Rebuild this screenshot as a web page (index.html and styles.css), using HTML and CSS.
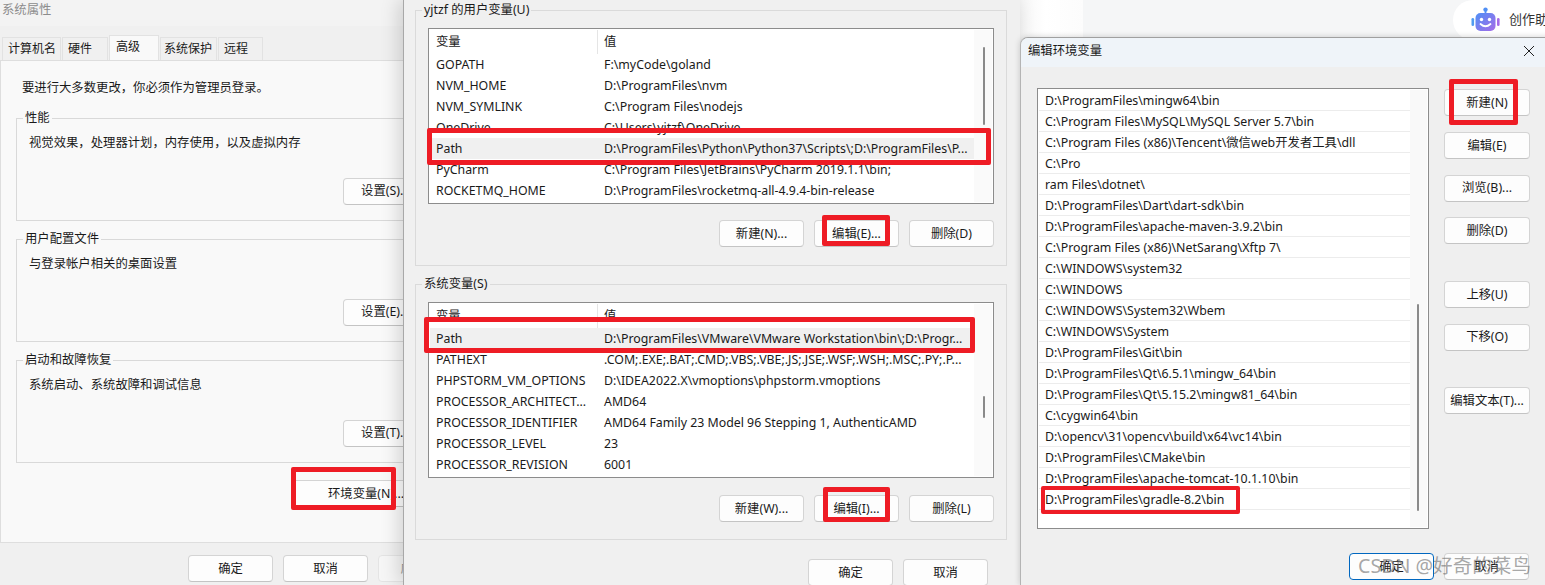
FILE: index.html
```html
<!DOCTYPE html>
<html lang="zh-CN">
<head>
<meta charset="utf-8">
<title>环境变量</title>
<link rel="stylesheet" href="styles.css">
</head>
<body>
<div class="backdrop">
  <div class="fade"></div>
  <div class="helper">
    <svg class="robot" width="30" height="25" viewBox="0 0 30 25">
      <defs><linearGradient id="rg" x1="0" y1="0" x2="1" y2="1"><stop offset="0" stop-color="#4f8ff5"/><stop offset="1" stop-color="#a66be8"/></linearGradient></defs>
      <circle cx="14.5" cy="2.6" r="2.2" fill="#4f8ff5"/>
      <rect x="13.6" y="3" width="1.8" height="4" fill="#4f8ff5"/>
      <rect x="0.5" y="11" width="2.6" height="8" rx="1.3" fill="#4f9bf0"/>
      <rect x="26" y="11" width="2.6" height="8" rx="1.3" fill="#a66be8"/>
      <rect x="4.5" y="6" width="20" height="18" rx="5" fill="url(#rg)"/>
      <circle cx="10.5" cy="12.5" r="1.7" fill="#fff"/>
      <circle cx="18.5" cy="12.5" r="1.7" fill="#fff"/>
      <path d="M9.5 17 Q14.5 21.5 19.5 17" fill="none" stroke="#fff" stroke-width="1.8" stroke-linecap="round"/>
    </svg>
    <span class="helper-text">创作助手</span>
  </div>
</div>

<section class="win win-system">
  <div class="sys-inner">
    <div class="sys-title">系统属性</div>
    <div class="tabs">
      <span class="tab tab-a">计算机名</span><span class="tab tab-b">硬件</span><span class="tab tab-on">高级</span><span class="tab tab-d">系统保护</span><span class="tab tab-e">远程</span>
    </div>
    <div class="panel">
      <p class="notice">要进行大多数更改，你必须作为管理员登录。</p>
      <fieldset class="sys-group">
        <legend>性能</legend>
        <p class="desc">视觉效果，处理器计划，内存使用，以及虚拟内存</p>
        <div class="right"><button class="btn">设置(S)...</button></div>
      </fieldset>
      <fieldset class="sys-group">
        <legend>用户配置文件</legend>
        <p class="desc">与登录帐户相关的桌面设置</p>
        <div class="right"><button class="btn">设置(E)...</button></div>
      </fieldset>
      <fieldset class="sys-group">
        <legend>启动和故障恢复</legend>
        <p class="desc">系统启动、系统故障和调试信息</p>
        <div class="right"><button class="btn">设置(T)...</button></div>
      </fieldset>
      <div class="env-row"><button class="btn btn-env">环境变量(N)...</button></div>
    </div>
    <div class="sys-actions">
      <button class="btn">确定</button><button class="btn">取消</button><button class="btn btn-off">应用(A)</button>
    </div>
  </div>
</section>

<section class="win win-env">
  <fieldset class="env-group">
    <legend>yjtzf 的用户变量(U)</legend>
    <div class="vlist">
      <div class="vbar"><div class="thumb thumb-user"></div></div>
      <div class="vrow vhead"><span>变量</span><span>值</span></div>
      <div class="vrow"><span>GOPATH</span><span>F:\myCode\goland</span></div>
      <div class="vrow"><span>NVM_HOME</span><span>D:\ProgramFiles\nvm</span></div>
      <div class="vrow"><span>NVM_SYMLINK</span><span>C:\Program Files\nodejs</span></div>
      <div class="vrow"><span>OneDrive</span><span>C:\Users\yjtzf\OneDrive</span></div>
      <div class="vrow vsel"><span>Path</span><span>D:\ProgramFiles\Python\Python37\Scripts\;D:\ProgramFiles\P...</span></div>
      <div class="vrow"><span>PyCharm</span><span>C:\Program Files\JetBrains\PyCharm 2019.1.1\bin;</span></div>
      <div class="vrow"><span>ROCKETMQ_HOME</span><span>D:\ProgramFiles\rocketmq-all-4.9.4-bin-release</span></div>
    </div>
    <div class="env-btns"><button class="btn">新建(N)...</button><button class="btn">编辑(E)...</button><button class="btn">删除(D)</button></div>
  </fieldset>
  <fieldset class="env-group env-group-sys">
    <legend>系统变量(S)</legend>
    <div class="vlist">
      <div class="vbar"><div class="thumb thumb-sys"></div></div>
      <div class="vrow vhead"><span>变量</span><span>值</span></div>
      <div class="vrow vsel"><span>Path</span><span>D:\ProgramFiles\VMware\VMware Workstation\bin\;D:\Progr...</span></div>
      <div class="vrow"><span>PATHEXT</span><span>.COM;.EXE;.BAT;.CMD;.VBS;.VBE;.JS;.JSE;.WSF;.WSH;.MSC;.PY;.P...</span></div>
      <div class="vrow"><span>PHPSTORM_VM_OPTIONS</span><span>D:\IDEA2022.X\vmoptions\phpstorm.vmoptions</span></div>
      <div class="vrow"><span>PROCESSOR_ARCHITECT...</span><span>AMD64</span></div>
      <div class="vrow"><span>PROCESSOR_IDENTIFIER</span><span>AMD64 Family 23 Model 96 Stepping 1, AuthenticAMD</span></div>
      <div class="vrow"><span>PROCESSOR_LEVEL</span><span>23</span></div>
      <div class="vrow"><span>PROCESSOR_REVISION</span><span>6001</span></div>
    </div>
    <div class="env-btns"><button class="btn">新建(W)...</button><button class="btn">编辑(I)...</button><button class="btn">删除(L)</button></div>
  </fieldset>
  <div class="env-actions"><button class="btn">确定</button><button class="btn">取消</button></div>
</section>

<section class="win win-edit">
  <header class="edit-title">
    <span>编辑环境变量</span>
    <svg class="close" width="12" height="12" viewBox="0 0 12 12"><path d="M1 1 L11 11 M11 1 L1 11" stroke="#222" stroke-width="1" fill="none"/></svg>
  </header>
  <div class="edit-body">
    <div class="plist">
      <div class="pbar"><div class="thumb thumb-path"></div></div>
      <div class="prow">D:\ProgramFiles\mingw64\bin</div>
      <div class="prow">C:\Program Files\MySQL\MySQL Server 5.7\bin</div>
      <div class="prow">C:\Program Files (x86)\Tencent\微信web开发者工具\dll</div>
      <div class="prow">C:\Pro</div>
      <div class="prow">ram Files\dotnet\</div>
      <div class="prow">D:\ProgramFiles\Dart\dart-sdk\bin</div>
      <div class="prow">D:\ProgramFiles\apache-maven-3.9.2\bin</div>
      <div class="prow">C:\Program Files (x86)\NetSarang\Xftp 7\</div>
      <div class="prow">C:\WINDOWS\system32</div>
      <div class="prow">C:\WINDOWS</div>
      <div class="prow">C:\WINDOWS\System32\Wbem</div>
      <div class="prow">C:\WINDOWS\System</div>
      <div class="prow">D:\ProgramFiles\Git\bin</div>
      <div class="prow">D:\ProgramFiles\Qt\6.5.1\mingw_64\bin</div>
      <div class="prow">D:\ProgramFiles\Qt\5.15.2\mingw81_64\bin</div>
      <div class="prow">C:\cygwin64\bin</div>
      <div class="prow">D:\opencv\31\opencv\build\x64\vc14\bin</div>
      <div class="prow">D:\ProgramFiles\CMake\bin</div>
      <div class="prow">D:\ProgramFiles\apache-tomcat-10.1.10\bin</div>
      <div class="prow">D:\ProgramFiles\gradle-8.2\bin</div>
    </div>
    <div class="edit-side">
      <button class="btn">新建(N)</button>
      <button class="btn">编辑(E)</button>
      <button class="btn">浏览(B)...</button>
      <button class="btn">删除(D)</button>
      <button class="btn side-gap">上移(U)</button>
      <button class="btn">下移(O)</button>
      <button class="btn side-gap">编辑文本(T)...</button>
    </div>
  </div>
  <div class="edit-actions"><button class="btn btn-default">确定</button><button class="btn">取消</button></div>
</section>

<div class="mark mark-env"></div>
<div class="mark mark-user-path"></div>
<div class="mark mark-user-edit"></div>
<div class="mark mark-sys-path"></div>
<div class="mark mark-sys-edit"></div>
<div class="mark mark-new"></div>
<div class="mark mark-gradle"></div>
<div class="watermark">CSDN @好奇的菜鸟</div>
</body>
</html>
```
FILE: styles.css
```css
* { box-sizing: border-box; }
html, body { margin: 0; height: 100%; }
body {
  position: relative;
  width: 1545px;
  height: 585px;
  overflow: hidden;
  background: #f5f6f7;
  color: #1a1a1a;
  font: 12.35px/16px "Noto Sans", "Noto Sans CJK SC", sans-serif;
}
p { margin: 0; }

/* browser page behind the dialogs */
.backdrop { position: absolute; left: 1020px; top: 0; width: 525px; height: 40px; overflow: hidden; }
.fade { position: absolute; left: 0; top: 0; width: 63px; height: 40px; background: linear-gradient(90deg, #f6f6f6, #fff 40%, #fcfcfc); }
.helper {
  position: absolute; left: 433px; top: 0; width: 120px; height: 40px;
  display: flex; align-items: center; gap: 8px; padding: 0 0 2px 18px;
  background: #fff; border-radius: 20px 0 0 20px;
}
.robot { flex: none; }
.helper-text { font-size: 13px; color: #333; white-space: nowrap; }

/* windows */
.win { position: absolute; top: 0; height: 585px; overflow: hidden; }

.btn {
  width: 85px; height: 27px; padding: 0;
  flex: none;
  background: #fdfdfd;
  border: 1px solid #d4d4d4; border-bottom-color: #c4c4c4;
  border-radius: 4px;
  color: #1a1a1a;
  font: inherit;
  white-space: nowrap;
  text-align: center;
}

/* system properties */
.win-system { left: 0; width: 403px; background: #f0f0f0; }
.sys-inner { width: 480px; }
.sys-title { height: 26px; padding: 2px 0 0 2px; background: #f3f3f3; color: #8c8c8c; }
.tabs { display: flex; align-items: flex-end; height: 34px; padding-left: 2px; font-size: 12px; }
.tab {
  height: 23px; padding-left: 5px; margin-right: 1px; line-height: 22px;
  background: #f0f0f0; border: 1px solid #e2e2e2; border-bottom: 0;
}
.tab-a { width: 59px; }
.tab-b { width: 46px; }
.tab-d { width: 57px; padding-left: 3px; }
.tab-e { width: 45px; }
.tab-on { width: 50px; height: 25px; padding-left: 6px; background: #f9f9f9; line-height: 21px; }
.panel { height: 483px; padding: 19px 40px 0 15px; background: #f9f9f9; border: 1px solid #dedede; border-right: 0; }
.notice { padding-left: 6px; margin-bottom: 14px; }
.sys-group {
  height: 111px; margin: 0 0 10px; padding: 9px 11px 0 12px; min-width: 0;
  border: 1px solid #d9d9d9;
}
.sys-group legend, .env-group legend { padding: 0 2px; margin-left: -6px; line-height: 16px; }
.desc { height: 16px; margin-bottom: 27px; }
.right { display: flex; justify-content: flex-end; }
.right .btn { padding-bottom: 2px; }
.env-row { display: flex; justify-content: flex-end; padding-top: 7px; }
.btn-env { width: 148px; }
.sys-actions { display: flex; gap: 10px; padding: 12px 0 0 188px; }
.btn-off { color: #9a9a9a; background: #f6f6f6; border-color: #e4e4e4; }

/* environment variables */
.win-env {
  left: 403px; width: 617px; padding: 2px 13px 0 12px;
  background: #f0f0f0;
  border-left: 1px solid #a8a8a8;
  overflow: visible;
  box-shadow: -4px 0 18px rgba(0, 0, 0, .16);
}
.env-group { height: 264px; margin: 0 0 10px -1px; padding: 10px 12px 0 12px; min-width: 0; border: 1px solid #dadada; }
.env-group-sys { height: 264px; margin-bottom: 19px; }
.env-group-sys .env-btns { padding-top: 17px; }
.vlist { position: relative; height: 176px; padding: 1px; background: #fff; border: 1px solid #8c8c8c; }
.vbar { position: absolute; right: 1px; top: 1px; bottom: 1px; width: 18px; background: #fafafa; }
.thumb { position: absolute; width: 2px; background: #8a8a8a; border-radius: 1px; }
.thumb-user { left: 9px; top: 17px; height: 78px; }
.thumb-sys { left: 9px; top: 92px; height: 22px; }
.vrow { display: grid; grid-template-columns: 168px 1fr; width: 547px; height: 21px; line-height: 21px; white-space: nowrap; }
.vrow span { padding-left: 6px; overflow: hidden; }
.vhead { height: 24px; line-height: 23px; }
.vhead span:first-child { border-right: 1px solid #e5e5e5; }
.vsel { background: #f0f0f0; }
.env-btns { display: flex; justify-content: flex-end; gap: 10px; padding: 16px 0 0; }
.env-actions { display: flex; justify-content: flex-end; gap: 10px; padding-right: 19px; }

/* edit variable */
.win-edit {
  left: 1020px; top: 37px; width: 540px; height: 548px;
  background: #efefef;
  border-top: 1px solid #a0a0a0; border-left: 1px solid #b4b4b4;
  border-radius: 8px 8px 0 0;
  box-shadow: 0 0 6px rgba(0, 0, 0, .18);
}
.edit-title {
  display: flex; align-items: center; justify-content: space-between;
  width: 525px; height: 29px; padding: 0 11px 3px 7px;
  background: #eff4f9;
}
.edit-body { display: flex; align-items: flex-start; gap: 15px; padding: 21px 0 0 16px; }
.plist { position: relative; flex: none; width: 392px; height: 441px; padding: 1px 18px 0 1px; background: #fff; border: 1px solid #8c8c8c; }
.pbar { position: absolute; right: 1px; top: 1px; bottom: 1px; width: 17px; background: #f9f9f9; }
.thumb-path { left: 7px; top: 214px; height: 207px; }
.prow { height: 21px; padding-left: 6px; line-height: 22px; border-bottom: 1px solid #ececec; white-space: nowrap; }
.edit-side { display: flex; flex-direction: column; gap: 15.67px; flex: none; margin-top: 1.4px; }
.edit-side .btn { width: 86px; }
.edit-side .side-gap { margin-top: 21px; }
.edit-actions { display: flex; gap: 10px; padding: 24px 0 0 328px; }
.btn-default { border: 1.5px solid #0067c0; }

/* red annotations */
.mark { position: absolute; border: 5px solid #ee1c25; border-radius: 2px; }
.mark-env { left: 291px; top: 467px; width: 105px; height: 43px; }
.mark-user-path { left: 427px; top: 128px; width: 564px; height: 37px; }
.mark-user-edit { left: 822px; top: 215px; width: 68px; height: 31px; }
.mark-sys-path { left: 424px; top: 317px; width: 551px; height: 36px; }
.mark-sys-edit { left: 823px; top: 487px; width: 67px; height: 35px; }
.mark-new { left: 1449px; top: 79px; width: 69px; height: 46px; }
.mark-gradle { left: 1041px; top: 486px; width: 199px; height: 28px; border-width: 4px; }

.watermark { position: absolute; left: 1358px; top: 552px; font-size: 19.6px; line-height: 28px; color: rgba(110, 110, 110, .62); white-space: nowrap; }
```
